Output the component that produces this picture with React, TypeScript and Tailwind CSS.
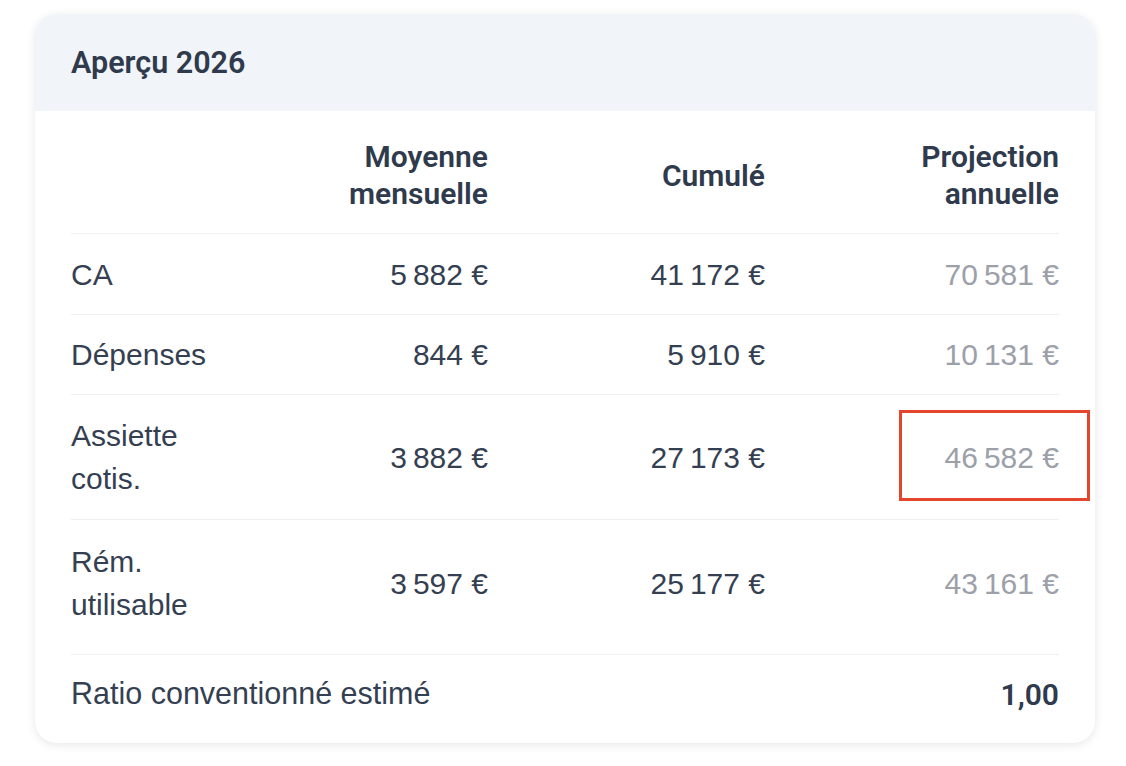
import React from "react";

const body = "font-['Liberation_Sans',Helvetica,Arial,sans-serif]";
const head = "font-['Roboto','Liberation_Sans',sans-serif]";

type Row = {
  label: string[];
  avg: string;
  cum: string;
  proj: string;
  h: string;
  extra?: string;
};

const rows: Row[] = [
  { label: ["CA"], avg: "5\u202F882\u00A0€", cum: "41\u202F172\u00A0€", proj: "70\u202F581\u00A0€", h: "h-[81px]" },
  { label: ["Dépenses"], avg: "844\u00A0€", cum: "5\u202F910\u00A0€", proj: "10\u202F131\u00A0€", h: "h-[80px]" },
  { label: ["Assiette", "cotis."], avg: "3\u202F882\u00A0€", cum: "27\u202F173\u00A0€", proj: "46\u202F582\u00A0€", h: "h-[125px]" },
  { label: ["Rém.", "utilisable"], avg: "3\u202F597\u00A0€", cum: "25\u202F177\u00A0€", proj: "43\u202F161\u00A0€", h: "h-[135px]", extra: "pb-[8px]" },
];

const cols = "grid grid-cols-[200px_217px_277px_294px]";

export default function App() {
  return (
    <div className="relative min-h-[766px] w-[1126px] bg-white pt-[14px] pl-[35px]">
      <div className="w-[1060px] overflow-hidden rounded-[22px] bg-white shadow-[0_2px_10px_rgba(15,23,42,0.10)]">
        <div className="flex h-[97px] items-center bg-[#f1f5f9] px-[36px]">
          <h2 className={`${head} text-[30.5px] font-semibold text-[#2f3a4d]`}>Aperçu 2026</h2>
        </div>

        <div className="px-[36px] text-[#353f52]">
          <div className={`${cols} ${head} h-[123px] items-center border-b border-[#eef0f3] pt-[6px] text-[30px] leading-[37px] font-semibold text-[#2f3a4d]`}>
            <div />
            <div className="text-right">
              Moyenne
              <br />
              mensuelle
            </div>
            <div className="text-right">Cumulé</div>
            <div className="text-right">
              Projection
              <br />
              annuelle
            </div>
          </div>

          {rows.map((r) => (
            <div
              key={r.label.join(" ")}
              className={`${cols} ${body} ${r.h} ${r.extra ?? ""} items-center border-b border-[#eef0f3] text-[30px] leading-[43px]`}
            >
              <div>
                {r.label.map((l) => (
                  <div key={l}>{l}</div>
                ))}
              </div>
              <div className="text-right">{r.avg}</div>
              <div className="text-right">{r.cum}</div>
              <div className="text-right text-[#9ca0a8]">{r.proj}</div>
            </div>
          ))}

          <div className={`flex h-[88px] items-center justify-between pb-[10px] ${body} text-[30.5px]`}>
            <span>Ratio conventionné estimé</span>
            <span className={`${head} text-[30px] font-semibold text-[#2f3a4d]`}>1,00</span>
          </div>
        </div>
      </div>

      <div className="absolute top-[410px] left-[899px] h-[91px] w-[191px] border-[3px] border-[#e4452d]" />
    </div>
  );
}
